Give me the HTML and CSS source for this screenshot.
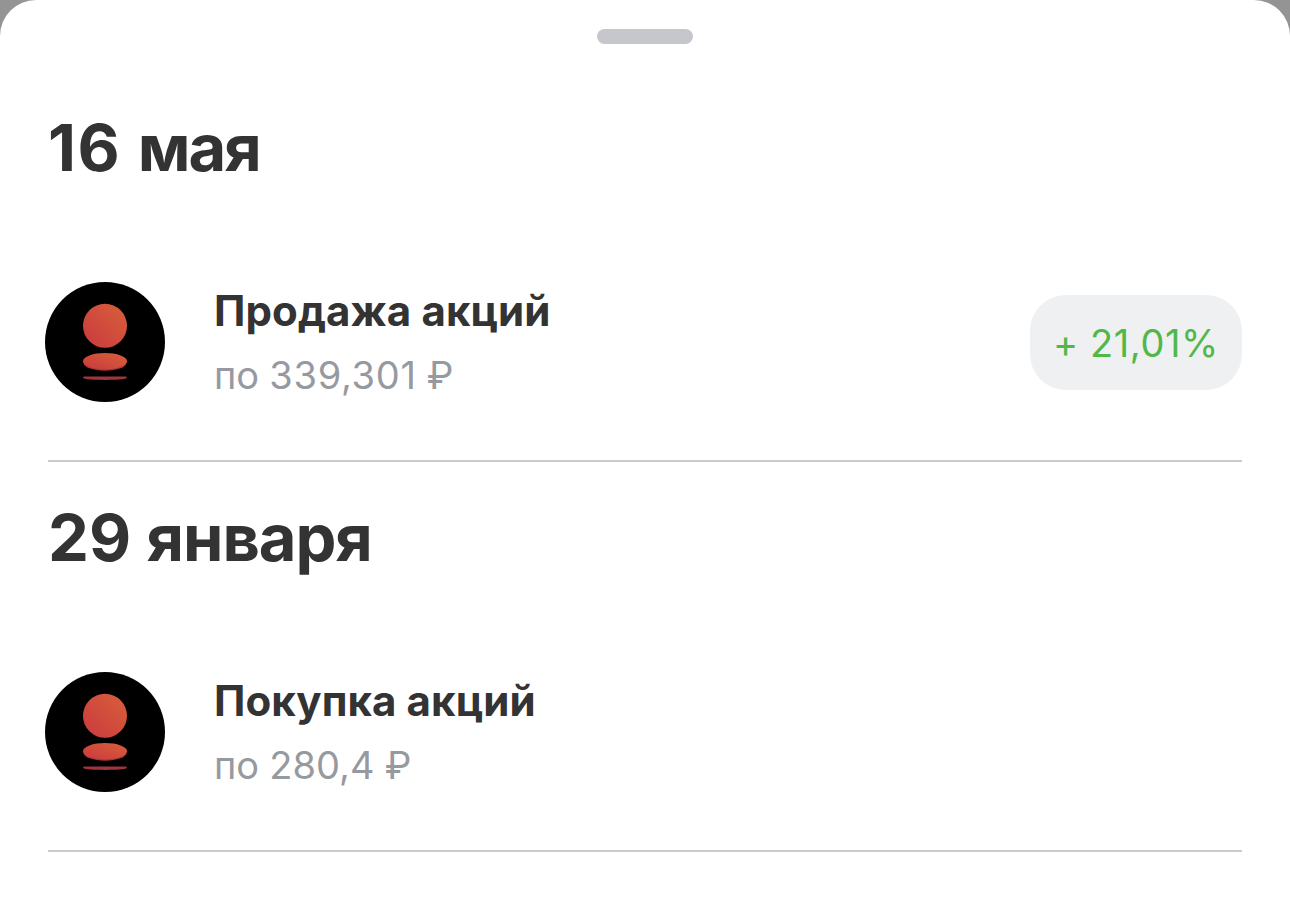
FILE: index.html
```html
<!DOCTYPE html>
<html lang="ru">
<head>
  <meta charset="UTF-8" />
  <meta name="viewport" content="width=device-width, initial-scale=1.0"/>
  <title>История сделок</title>
  <link rel="stylesheet" href="styles.css">
</head>
<body>
<svg class="defs" width="0" height="0">
  <defs>
    <linearGradient id="red" x1="1" y1="0" x2="0" y2="1">
      <stop offset="0" stop-color="#d8603a"/>
      <stop offset="1" stop-color="#ca393e"/>
    </linearGradient>
    <symbol id="logo" viewBox="0 0 120 120">
      <circle cx="60" cy="60" r="60" fill="#000"/>
      <circle cx="60" cy="43.8" r="22" fill="url(#red)"/>
      <ellipse cx="60" cy="80.4" rx="21.5" ry="8.4" fill="#a9323a"/>
      <ellipse cx="60" cy="79.2" rx="22" ry="8.2" fill="url(#red)"/>
      <path d="M38 95.6Q38 94.4 40 94.4H80Q82 94.4 82 95.6C82 97.2 76 98 60 98S38 97.2 38 95.6Z" fill="#9f353d"/>
    </symbol>
  </defs>
</svg>
<main class="sheet">
  <div class="handle"></div>

  <section class="day">
    <h2 class="may"><span>16 </span>мая</h2>
    <div class="deal">
      <svg class="logo"><use href="#logo"/></svg>
      <div class="info">
        <div class="name">Продажа акций</div>
        <div class="price">по <span class="sum">339,301</span> ₽</div>
      </div>
      <div class="profit">+ 21,01%</div>
    </div>
  </section>

  <section class="day">
    <h2 class="january"><span>29 </span>января</h2>
    <div class="deal">
      <svg class="logo"><use href="#logo"/></svg>
      <div class="info">
        <div class="name">Покупка акций</div>
        <div class="price">по 280,4 ₽</div>
      </div>
    </div>
  </section>
</main>
</body>
</html>
```
FILE: styles.css
```css
* {
  box-sizing: border-box;
}
body {
  font-family: Inter, "Liberation Sans", sans-serif;
  background: #949494;
  margin: 0;
  color: #333;
}
.defs {
  display: block;
}
.sheet {
  height: 906px;
  background: white;
  border-radius: 36px 36px 0 0;
  padding: 29px 48px 0;
  overflow: hidden;
}
.handle {
  width: 96px;
  height: 15px;
  margin: 0 auto 28px;
  border-radius: 8px;
  background: #c6c7cc;
}
.day {
  height: 390px;
  padding-top: 36px;
  border-bottom: 2px solid #cbcbcd;
}
h2 {
  margin: 0 0 94px;
  font-size: 65px;
  line-height: 80px;
  font-weight: 700;
  white-space: nowrap;
}
.may {
  letter-spacing: -2px;
}
.may span {
  letter-spacing: 1.4px;
}
.january {
  letter-spacing: -1.1px;
}
.january span {
  letter-spacing: 0;
}
.deal {
  display: flex;
  align-items: center;
  height: 120px;
  margin-left: -3px;
}
.logo {
  width: 120px;
  height: 120px;
  margin-right: 49px;
}
.info {
  flex: 1;
  padding-top: 2px;
}
.name {
  font-size: 42px;
  line-height: 60px;
  font-weight: 700;
  letter-spacing: 0.1px;
}
.price {
  font-size: 38px;
  line-height: 60px;
  margin-top: 4px;
  word-spacing: -0.5px;
  color: #9799a0;
}
.sum {
  letter-spacing: 0.7px;
}
.profit {
  width: 212px;
  height: 95px;
  border-radius: 36px;
  background: #eef0f2;
  color: #51b848;
  font-size: 38px;
  line-height: 96px;
  letter-spacing: 0.6px;
  text-align: center;
  /* keeps the plus on the lowercase axis */
  font-feature-settings: "calt" 0;
}
```
